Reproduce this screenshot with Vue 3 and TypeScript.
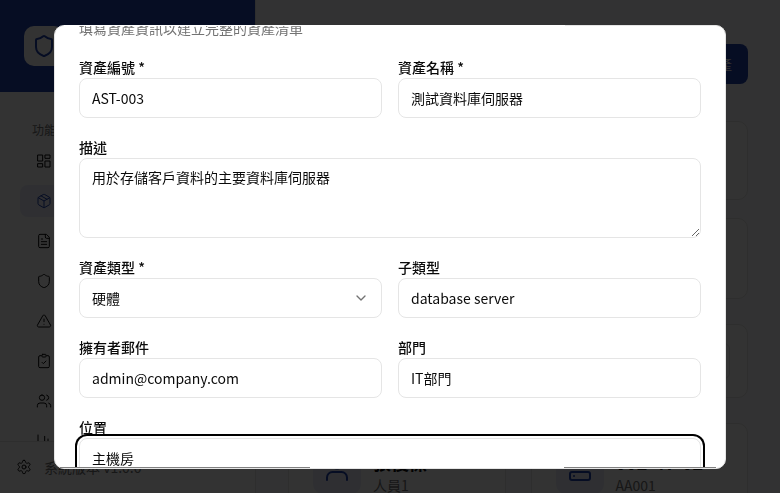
<script setup lang="ts">
const menu = [
  { name: '總覽', paths: ['M3 3h7v9H3z', 'M14 3h7v5h-7z', 'M14 12h7v9h-7z', 'M3 16h7v5H3z'] },
  { name: '資產管理', active: true, paths: ['M11 21.73a2 2 0 0 0 2 0l7-4A2 2 0 0 0 21 16V8a2 2 0 0 0-1-1.73l-7-4a2 2 0 0 0-2 0l-7 4A2 2 0 0 0 3 8v8a2 2 0 0 0 1 1.73z', 'M12 22V12', 'M3.29 7 12 12l8.71-5', 'm7.5 4.27 9 5.15'] },
  { name: '文件管理', paths: ['M15 2H6a2 2 0 0 0-2 2v16a2 2 0 0 0 2 2h12a2 2 0 0 0 2-2V7Z', 'M14 2v4a2 2 0 0 0 2 2h4', 'M10 9H8', 'M16 13H8', 'M16 17H8'] },
  { name: '風險評估', paths: ['M20 13c0 5-3.5 7.5-7.66 8.95a1 1 0 0 1-.67-.01C7.5 20.5 4 18 4 13V6a1 1 0 0 1 1-1c2 0 4.5-1.2 6.24-2.72a1.17 1.17 0 0 1 1.52 0C14.51 3.81 17 5 19 5a1 1 0 0 1 1 1z'] },
  { name: '事件管理', paths: ['m21.73 18-8-14a2 2 0 0 0-3.48 0l-8 14A2 2 0 0 0 4 21h16a2 2 0 0 0 1.73-3', 'M12 9v4', 'M12 17h.01'] },
  { name: '稽核管理', paths: ['M10 2h4a1 1 0 0 1 1 1v2a1 1 0 0 1-1 1h-4a1 1 0 0 1-1-1V3a1 1 0 0 1 1-1z', 'M16 4h2a2 2 0 0 1 2 2v14a2 2 0 0 1-2 2H6a2 2 0 0 1-2-2V6a2 2 0 0 1 2-2h2', 'm9 14 2 2 4-4'] },
  { name: '人員管理', paths: ['M16 21v-2a4 4 0 0 0-4-4H6a4 4 0 0 0-4 4v2', 'M9 3a4 4 0 1 0 0 8 4 4 0 0 0 0-8z', 'M22 21v-2a4 4 0 0 0-3-3.87', 'M16 3.13a4 4 0 0 1 0 7.75'] },
  { name: '報表', paths: ['M3 3v16a2 2 0 0 0 2 2h16', 'M18 17V9', 'M13 17V5', 'M8 17v-3'] }
]
const gear = ['M12.22 2h-.44a2 2 0 0 0-2 2v.18a2 2 0 0 1-1 1.73l-.43.25a2 2 0 0 1-2 0l-.15-.08a2 2 0 0 0-2.73.73l-.22.38a2 2 0 0 0 .73 2.73l.15.1a2 2 0 0 1 1 1.72v.51a2 2 0 0 1-1 1.74l-.15.09a2 2 0 0 0-.73 2.73l.22.38a2 2 0 0 0 2.73.73l.15-.08a2 2 0 0 1 2 0l.43.25a2 2 0 0 1 1 1.73V20a2 2 0 0 0 2 2h.44a2 2 0 0 0 2-2v-.18a2 2 0 0 1 1-1.73l.43-.25a2 2 0 0 1 2 0l.15.08a2 2 0 0 0 2.73-.73l.22-.39a2 2 0 0 0-.73-2.73l-.15-.08a2 2 0 0 1-1-1.74v-.5a2 2 0 0 1 1-1.74l.15-.09a2 2 0 0 0 .73-2.73l-.22-.38a2 2 0 0 0-2.73-.73l-.15.08a2 2 0 0 1-2 0l-.43-.25a2 2 0 0 1-1-1.73V4a2 2 0 0 0-2-2z', 'M15 12a3 3 0 1 1-6 0 3 3 0 0 1 6 0z']
</script>

<template>
  <div class="page">
    <aside class="sidebar">
      <div class="brand">
        <div class="logo">
          <svg viewBox="0 0 24 24" class="logo-icon"><path d="M20 13c0 5-3.5 7.5-7.66 8.95a1 1 0 0 1-.67-.01C7.5 20.5 4 18 4 13V6a1 1 0 0 1 1-1c2 0 4.5-1.2 6.24-2.72a1.17 1.17 0 0 1 1.52 0C14.51 3.81 17 5 19 5a1 1 0 0 1 1 1z" /></svg>
        </div>
      </div>
      <nav class="nav">
        <div class="nav-label">功能選單</div>
        <div v-for="item in menu" :key="item.name" class="nav-item" :class="{ active: item.active }">
          <svg viewBox="0 0 24 24" class="nav-icon"><path v-for="d in item.paths" :key="d" :d="d" /></svg>
        </div>
      </nav>
      <div class="side-foot">
        <svg viewBox="0 0 24 24" class="gear"><path v-for="d in gear" :key="d" :d="d" /></svg>
        <span>系統版本 v1.0.0</span>
      </div>
    </aside>

    <main class="main">
      <div class="toolbar"><button class="add">新增資產</button></div>
      <div class="cards">
        <div class="card h1"></div><div class="card h1"></div>
        <div class="card h2"></div><div class="card h2"></div>
        <div class="card h3"></div><div class="card h3"><div class="inner"></div></div>
        <div class="card h4">
          <div class="ic">
            <svg viewBox="0 0 24 24"><path d="M2 22v-2.5A5.5 5.5 0 0 1 7.5 14h9a5.5 5.5 0 0 1 5.5 5.5V22" /><circle cx="12" cy="6" r="4.5" /></svg>
          </div>
          <div class="ctext"><div class="cname">張俊傑</div><div class="csub">人員1</div></div>
        </div>
        <div class="card h4">
          <div class="ic">
            <svg viewBox="0 0 24 24"><rect x="2" y="2" width="20" height="8" rx="2" /><rect x="2" y="14" width="20" height="8" rx="2" /><path d="M6 6h.01M6 18h.01" /></svg>
          </div>
          <div class="ctext"><div class="cname">002-47-02</div><div class="csub">AA001</div></div>
        </div>
      </div>
    </main>

    <div class="overlay">
      <div class="modal">
        <div class="seam seam-top"></div>
        <div class="clip">
          <p class="sub">填寫資產資訊以建立完整的資產清單</p>
          <div class="form">
            <label class="field"><span>資產編號 *</span><input value="AST-003" /></label>
            <label class="field"><span>資產名稱 *</span><input value="測試資料庫伺服器" /></label>
            <label class="field wide"><span>描述</span><textarea>用於存儲客戶資料的主要資料庫伺服器</textarea></label>
            <div class="field">
              <span>資產類型 *</span>
              <div class="select">
                <span class="sel-text">硬體</span>
                <svg viewBox="0 0 24 24" class="chev"><path d="m6 9 6 6 6-6" /></svg>
              </div>
            </div>
            <label class="field"><span>子類型</span><input value="database server" /></label>
            <label class="field"><span>擁有者郵件</span><input value="admin@company.com" /></label>
            <label class="field"><span>部門</span><input value="IT部門" /></label>
            <label class="field wide"><span>位置</span><input class="focus" value="主機房" /></label>
          </div>
        </div>
        <div class="seam seam-bl"></div>
        <div class="seam seam-br"></div>
      </div>
    </div>
  </div>
</template>

<style>
html, body { margin: 0; height: 100%; overflow: hidden; }
</style>

<style scoped>
* { box-sizing: border-box; }
.page {
  display: flex;
  width: 780px;
  height: 493px;
  overflow: hidden;
  background: #fff;
  font-family: "Noto Sans CJK TC", "Noto Sans", sans-serif;
  font-size: 14px;
  color: #0a0a0a;
}
.sidebar { width: 256px; flex: none; height: 100%; display: flex; flex-direction: column; background: #fff; border-right: 1px solid #e5e5e5; }
.brand { height: 92px; flex: none; background: #1e40af; padding: 26px 24px; }
.logo { width: 40px; height: 40px; border-radius: 10px; background: #fff; display: flex; align-items: center; justify-content: center; }
.logo-icon { width: 24px; height: 24px; fill: none; stroke: #1e40af; stroke-width: 2; stroke-linecap: round; stroke-linejoin: round; }
.nav { flex: 1; min-height: 0; overflow: hidden; padding: 28px 20px 0; display: flex; flex-direction: column; gap: 8px; }
.nav-label { height: 20px; padding-left: 12px; font-size: 12px; line-height: 20px; color: #737373; margin-bottom: -3px; }
.nav-item { height: 32px; flex: none; border-radius: 8px; padding: 0 16px; display: flex; align-items: center; }
.nav-item.active { background: #e8ecf7; }
.nav-item.active .nav-icon { stroke: #1e40af; }
.nav-icon { width: 16px; height: 16px; fill: none; stroke: #0a0a0a; stroke-width: 1.5; stroke-linecap: round; stroke-linejoin: round; }
.side-foot { height: 52px; flex: none; border-top: 1px solid #e5e5e5; padding: 0 16px 2px; display: flex; align-items: center; gap: 12px; color: #737373; background: #fff; font-size: 14px; }
.gear { width: 16px; height: 16px; fill: none; stroke: #0a0a0a; stroke-width: 1.5; stroke-linecap: round; stroke-linejoin: round; }
.main { flex: 1; min-width: 0; padding: 44px 32px 0 32px; background: #f8fafc; }
.toolbar { display: flex; justify-content: flex-end; height: 40px; margin-bottom: 37px; }
.add { height: 40px; padding: 0 16px; border: 0; border-radius: 8px; background: #1e40af; color: #fff; font: inherit; }
.cards { display: grid; grid-template-columns: 1fr 1fr; column-gap: 25px; }
.card { border: 1px solid #e5e5e5; border-radius: 10px; background: #fff; }
.h1 { height: 79px; margin-bottom: 18px; }
.h2 { height: 81px; margin-bottom: 25px; }
.h3 { height: 74px; margin-bottom: 25px; display: flex; justify-content: flex-end; align-items: center; padding-right: 17px; }
.inner { width: 60px; height: 36px; border: 1px solid #e5e5e5; border-radius: 6px; }
.h4 { height: 100px; display: flex; gap: 12px; padding: 22px 24px; }
.ic { width: 48px; height: 48px; flex: none; border-radius: 10px; background: #e8ecf7; display: flex; align-items: center; justify-content: center; }
.ic svg { width: 24px; height: 24px; fill: none; stroke: #1e40af; stroke-width: 2; stroke-linecap: round; stroke-linejoin: round; }
.ctext { padding-top: 3px; }
.cname { font-size: 18px; line-height: 26px; font-weight: 700; white-space: nowrap; }
.csub { font-size: 14px; line-height: 20px; color: #737373; }

.overlay { position: fixed; inset: 0; background: rgba(0, 0, 0, 0.8); display: flex; justify-content: center; align-items: flex-start; }
.modal { position: relative; width: 672px; height: 444px; margin-top: 25px; background: #fff; border: 1px solid #e5e5e5; border-radius: 10px; }
.clip { height: 100%; overflow: hidden; padding: 0 24px; border-radius: 9px; }
.sub { margin: -8px 0 16px; color: #737373; line-height: 20px; white-space: nowrap; }
.form { display: grid; grid-template-columns: 1fr 1fr; gap: 16px; }
.field { display: flex; flex-direction: column; min-width: 0; }
.field > span { line-height: 26px; height: 24px; font-weight: 500; }
.wide { grid-column: 1 / -1; }
input, textarea, .select {
  width: 100%;
  height: 40px;
  border: 1px solid #e5e5e5;
  border-radius: 8px;
  background: #fff;
  padding: 0 12px;
  font: inherit;
  color: #0a0a0a;
  outline: none;
  display: block;
  margin: 0;
}
textarea { height: 80px; padding: 7px 12px; line-height: 22px; resize: vertical; }
.select { display: flex; align-items: center; justify-content: space-between; }
.chev { width: 16px; height: 16px; fill: none; stroke: #737373; stroke-width: 2; stroke-linecap: round; stroke-linejoin: round; }
.focus { box-shadow: 0 0 0 2px #fff, 0 0 0 4px #000; position: relative; }
.seam { position: absolute; height: 1px; }
.seam-top { top: -1px; left: 9px; width: 501px; background: #fff; }
.seam-bl { bottom: 0; left: 5px; width: 250px; background: #808080; }
.seam-br { bottom: 0; left: 509px; right: 9px; background: #808080; }
</style>
